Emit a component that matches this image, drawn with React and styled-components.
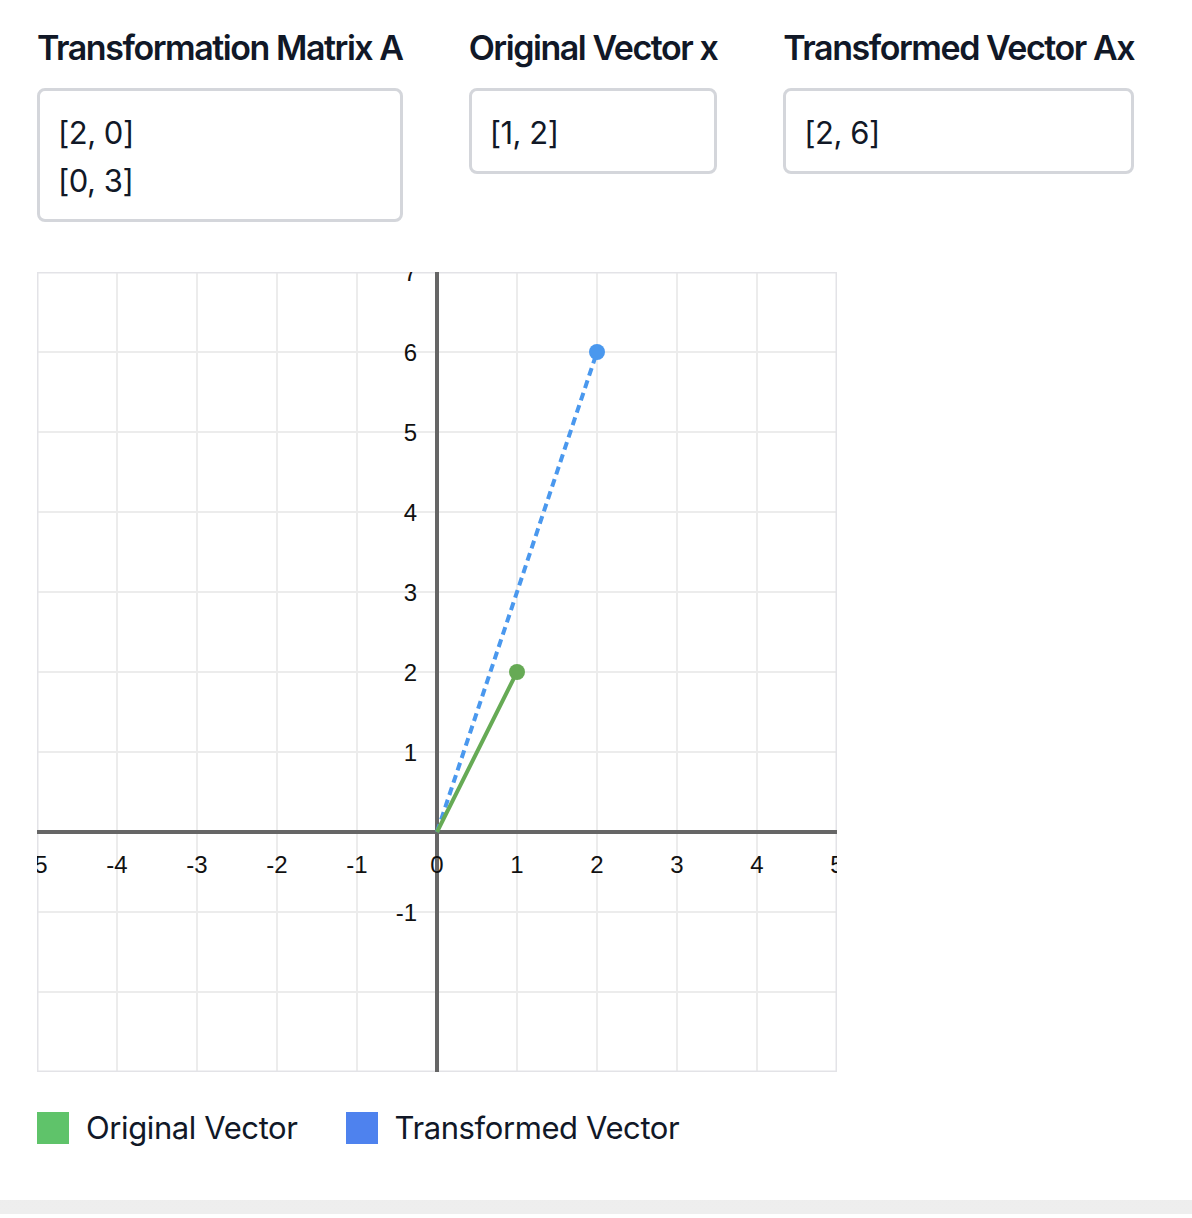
import React from 'react';
import styled, { createGlobalStyle } from 'styled-components';

const GlobalStyle = createGlobalStyle`
  html, body {
    margin: 0;
    padding: 0;
    background: #ffffff;
  }
  body {
    font-family: Inter, "Liberation Sans", sans-serif;
    color: #111827;
  }
`;

const Page = styled.div`
  padding-bottom: 14px;
  background: linear-gradient(to bottom, #dcdcdc, #eeeeee);
`;

const Card = styled.div`
  background: #fff;
  padding: 21px 37px 48px;
`;

const TopRow = styled.div`
  display: flex;
  align-items: flex-start;
  gap: 66px;
`;

const Column = styled.div`
  display: flex;
  flex-direction: column;
`;

const Label = styled.h3`
  margin: 0 0 13px;
  font-size: 34px;
  line-height: 54px;
  font-weight: 600;
  letter-spacing: -1.45px;
  white-space: nowrap;
`;

const ValueBox = styled.div`
  border: 3px solid #d4d6db;
  border-radius: 8px;
  padding: 18px 18px 14px;
  font-size: 31px;
  line-height: 48px;
  letter-spacing: -0.5px;
`;

const ChartWrap = styled.div`
  margin-top: 50px;
  width: 800px;
  height: 800px;
`;

const Legend = styled.div`
  display: flex;
  align-items: center;
  gap: 48px;
  margin-top: 32px;
`;

const LegendItem = styled.div`
  display: flex;
  align-items: center;
  gap: 17px;
  font-size: 31px;
  line-height: 48px;
  letter-spacing: -0.4px;
`;

const Swatch = styled.span`
  width: 32px;
  height: 32px;
  background: ${(p) => p.$color};
`;

const UNIT = 80;
const OX = 400;
const OY = 560;
const px = (x) => OX + x * UNIT;
const py = (y) => OY - y * UNIT;

const Chart = ({ original, transformed }) => {
  const xs = [-5, -4, -3, -2, -1, 0, 1, 2, 3, 4, 5];
  const ys = [-3, -2, -1, 0, 1, 2, 3, 4, 5, 6, 7];
  const yLabels = [-1, 1, 2, 3, 4, 5, 6, 7];
  return (
    <svg width="800" height="800" viewBox="0 0 800 800" style={{ display: 'block', overflow: 'hidden' }}>
      {xs.map((x) => (
        <line key={'gx' + x} x1={px(x)} y1="0" x2={px(x)} y2="800" stroke="#ececec" strokeWidth="2" />
      ))}
      {ys.map((y) => (
        <line key={'gy' + y} x1="0" y1={py(y)} x2="800" y2={py(y)} stroke="#ececec" strokeWidth="2" />
      ))}
      <rect x="0" y="0" width="800" height="800" fill="none" stroke="#e3e3e7" strokeWidth="3" />
      <line x1="0" y1={OY} x2="800" y2={OY} stroke="#666" strokeWidth="4" />
      <line x1={OX} y1="0" x2={OX} y2="800" stroke="#666" strokeWidth="4" />
      <g fontFamily='"Liberation Sans", Arial, sans-serif' fontSize="24" fill="#111">
        {xs.map((x) => (
          <text key={'lx' + x} x={px(x)} y={OY + 41} textAnchor="middle">
            {x}
          </text>
        ))}
        {yLabels.map((y) => (
          <text key={'ly' + y} x={OX - 20} y={py(y) + 9} textAnchor="end">
            {y}
          </text>
        ))}
      </g>
      <line
        x1={OX}
        y1={OY}
        x2={px(transformed[0])}
        y2={py(transformed[1])}
        stroke="#4a98ee"
        strokeWidth="4"
        strokeDasharray="8 5"
      />
      <circle cx={px(transformed[0])} cy={py(transformed[1])} r="8" fill="#4a98ee" />
      <line
        x1={OX}
        y1={OY}
        x2={px(original[0])}
        y2={py(original[1])}
        stroke="#66aa55"
        strokeWidth="4"
      />
      <circle cx={px(original[0])} cy={py(original[1])} r="8" fill="#66aa55" />
    </svg>
  );
};

const App = () => {
  const A = [
    [2, 0],
    [0, 3],
  ];
  const x = [1, 2];
  const ax = [A[0][0] * x[0] + A[0][1] * x[1], A[1][0] * x[0] + A[1][1] * x[1]];

  return (
    <>
      <GlobalStyle />
      <Page>
        <Card>
          <TopRow>
            <Column>
              <Label>Transformation Matrix A</Label>
              <ValueBox>
                {A.map((row, i) => (
                  <div key={i}>[{row.join(', ')}]</div>
                ))}
              </ValueBox>
            </Column>
            <Column>
              <Label>Original Vector x</Label>
              <ValueBox>[{x.join(', ')}]</ValueBox>
            </Column>
            <Column>
              <Label>Transformed Vector Ax</Label>
              <ValueBox>[{ax.join(', ')}]</ValueBox>
            </Column>
          </TopRow>
          <ChartWrap>
            <Chart original={x} transformed={ax} />
          </ChartWrap>
          <Legend>
            <LegendItem>
              <Swatch $color="#5fc36a" />
              Original Vector
            </LegendItem>
            <LegendItem>
              <Swatch $color="#4e82ee" />
              Transformed Vector
            </LegendItem>
          </Legend>
        </Card>
      </Page>
    </>
  );
};

export default App;
